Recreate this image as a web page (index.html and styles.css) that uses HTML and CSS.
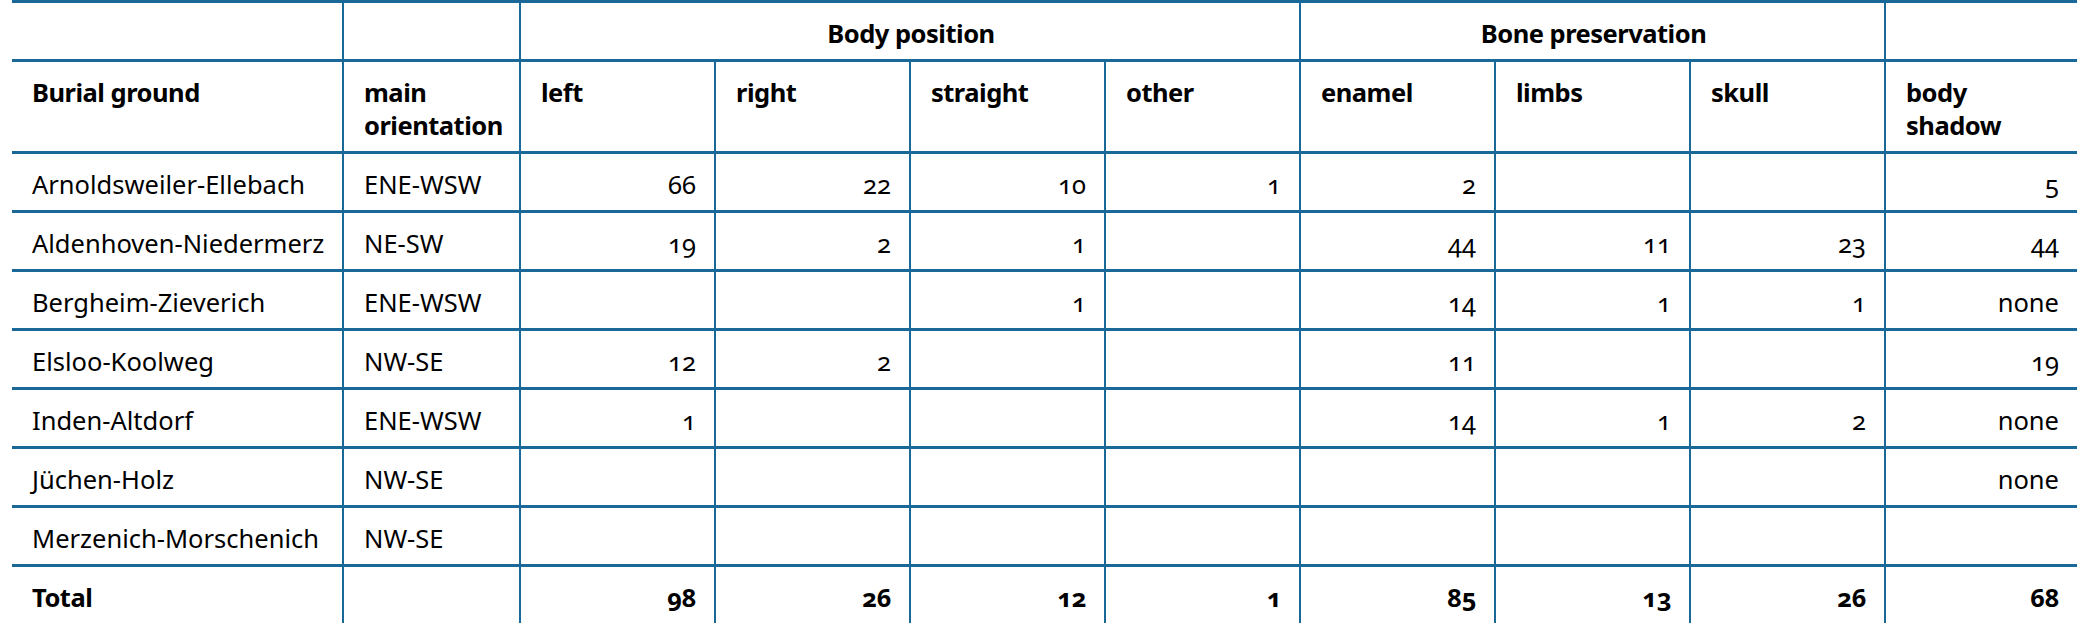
FILE: index.html
```html
<!DOCTYPE html>
<html lang="en">
<head>
<meta charset="utf-8">
<title>Burial grounds</title>
<link rel="stylesheet" href="styles.css">
</head>
<body>
<div class="wrap">
  <div class="grid" role="table">
    <div class="c h top"></div>
    <div class="c h top"></div>
    <div class="c h top group span4">Body position</div>
    <div class="c h top group span3">Bone preservation</div>
    <div class="c h top last"></div>

    <div class="c h">Burial ground</div>
    <div class="c h">main<br>orientation</div>
    <div class="c h">left</div>
    <div class="c h">right</div>
    <div class="c h">straight</div>
    <div class="c h">other</div>
    <div class="c h">enamel</div>
    <div class="c h">limbs</div>
    <div class="c h">skull</div>
    <div class="c h last">body<br>shadow</div>

    <div class="c">Arnoldsweiler-Ellebach</div>
    <div class="c">ENE-WSW</div>
    <div class="c n">66</div>
    <div class="c n">22</div>
    <div class="c n">10</div>
    <div class="c n">1</div>
    <div class="c n">2</div>
    <div class="c n"></div>
    <div class="c n"></div>
    <div class="c n last">5</div>

    <div class="c">Aldenhoven-Niedermerz</div>
    <div class="c">NE-SW</div>
    <div class="c n">19</div>
    <div class="c n">2</div>
    <div class="c n">1</div>
    <div class="c n"></div>
    <div class="c n">44</div>
    <div class="c n">11</div>
    <div class="c n">23</div>
    <div class="c n last">44</div>

    <div class="c">Bergheim-Zieverich</div>
    <div class="c">ENE-WSW</div>
    <div class="c n"></div>
    <div class="c n"></div>
    <div class="c n">1</div>
    <div class="c n"></div>
    <div class="c n">14</div>
    <div class="c n">1</div>
    <div class="c n">1</div>
    <div class="c n last">none</div>

    <div class="c">Elsloo-Koolweg</div>
    <div class="c">NW-SE</div>
    <div class="c n">12</div>
    <div class="c n">2</div>
    <div class="c n"></div>
    <div class="c n"></div>
    <div class="c n">11</div>
    <div class="c n"></div>
    <div class="c n"></div>
    <div class="c n last">19</div>

    <div class="c">Inden-Altdorf</div>
    <div class="c">ENE-WSW</div>
    <div class="c n">1</div>
    <div class="c n"></div>
    <div class="c n"></div>
    <div class="c n"></div>
    <div class="c n">14</div>
    <div class="c n">1</div>
    <div class="c n">2</div>
    <div class="c n last">none</div>

    <div class="c">Jüchen-Holz</div>
    <div class="c">NW-SE</div>
    <div class="c n"></div>
    <div class="c n"></div>
    <div class="c n"></div>
    <div class="c n"></div>
    <div class="c n"></div>
    <div class="c n"></div>
    <div class="c n"></div>
    <div class="c n last">none</div>

    <div class="c">Merzenich-Morschenich</div>
    <div class="c">NW-SE</div>
    <div class="c n"></div>
    <div class="c n"></div>
    <div class="c n"></div>
    <div class="c n"></div>
    <div class="c n"></div>
    <div class="c n"></div>
    <div class="c n"></div>
    <div class="c n last"></div>

    <div class="c b">Total</div>
    <div class="c b"></div>
    <div class="c n b">98</div>
    <div class="c n b">26</div>
    <div class="c n b">12</div>
    <div class="c n b">1</div>
    <div class="c n b">85</div>
    <div class="c n b">13</div>
    <div class="c n b">26</div>
    <div class="c n b last">68</div>
  </div>
</div>
</body>
</html>
```
FILE: styles.css
```css
html, body {
  margin: 0;
  padding: 0;
  background: #ffffff;
}

.wrap {
  padding-left: 12px;
}

.grid {
  display: grid;
  grid-template-columns: 332px 177px repeat(7, 195px) 191px;
  font-family: "Noto Sans", "Open Sans", sans-serif;
  font-size: 25.5px;
  line-height: 33px;
  color: #000000;
  font-variant-numeric: oldstyle-nums;
}

.c {
  box-sizing: border-box;
  padding: 14px 18px 9px 20px;
  border-right: 2px solid #1a6898;
  border-bottom: 3px solid #1a6898;
  white-space: nowrap;
  min-height: 59px;
}

.c.last {
  border-right: none;
}

.top {
  border-top: 3px solid #1a6898;
}

.h,
.b {
  font-weight: 700;
  letter-spacing: -0.5px;
}

.group {
  text-align: center;
}

.span4 {
  grid-column: span 4;
}

.span3 {
  grid-column: span 3;
}

.n {
  text-align: right;
}
```
